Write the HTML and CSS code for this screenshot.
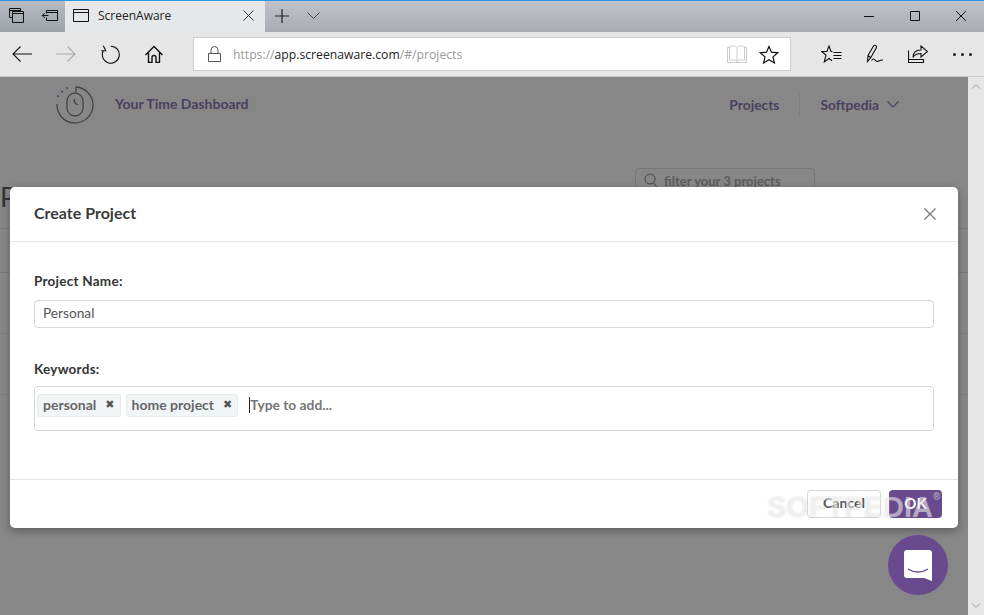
FILE: index.html
```html
<!DOCTYPE html>
<html lang="en">
<head>
    <meta charset="UTF-8">
    <title>ScreenAware</title>
    <link rel="stylesheet" href="styles.css">
</head>
<body>
    <!-- Tab strip -->
    <div class="tabbar">
        <div class="tab-tools">
            <svg width="15" height="15" viewBox="0 0 15 15"><path d="M.5 9.500v-9h11v3M.5 2.500h11M.5 9.500h3M3.500 3.500h11v11h-11zM3.500 5.500h11" fill="none" stroke="#111"/></svg>
            <svg width="17" height="11" viewBox="0 0 17 11"><path d="M5.500 3.500v-3h11v10h-11v-3M5.500 2.500h11M7.500 5.500h-6M3.800 3l-2.500 2.500L3.800 8" fill="none" stroke="#111"/></svg>
        </div>
        <div class="tab">
            <svg width="16" height="13" viewBox="0 0 16 13"><path d="M.5.5h15v12H.5zM.5 3.500h15" fill="none" stroke="#111"/></svg>
            <span class="tab-title">ScreenAware</span>
            <svg width="11" height="11" viewBox="0 0 11 11"><path d="M.5.500l10 10M10.500.5l-10 10" stroke="#333"/></svg>
        </div>
        <div class="tab-new">
            <svg width="14" height="14" viewBox="0 0 14 14"><path d="M7 0v14M0 7h14" stroke="#222" stroke-width="1.200"/></svg>
            <svg width="13" height="7" viewBox="0 0 13 7"><path d="M.5.500l6 6 6-6" fill="none" stroke="#444"/></svg>
        </div>
        <div class="win-btns">
            <svg width="10" height="10" viewBox="0 0 10 10"><path d="M0 5.500h10" stroke="#111"/></svg>
            <svg width="10" height="10" viewBox="0 0 10 10"><path d="M.5.500h9v9h-9z" fill="none" stroke="#111"/></svg>
            <svg width="10" height="10" viewBox="0 0 10 10"><path d="M0 0l10 10M10 0L0 10" stroke="#111"/></svg>
        </div>
    </div>

    <!-- Address bar -->
    <div class="toolbar">
        <div class="nav-btns">
            <svg width="20" height="16" viewBox="0 0 20 16"><path d="M20 8H1M8.500.5L1 8l7.500 7.500" fill="none" stroke="#111" stroke-width="1.100"/></svg>
            <svg width="20" height="16" viewBox="0 0 20 16"><path d="M0 8h19M11.500.5L19 8l-7.500 7.500" fill="none" stroke="#aaa" stroke-width="1.100"/></svg>
            <svg class="refresh" width="19" height="19" viewBox="0 0 19 19"><path d="M9.500 1a8.500 8.500 0 1 1-7.300 4.200M2 .5l2.500 5H0" fill="none" stroke="#111" stroke-width="1.100" transform="translate(.3 .2)"/></svg>
            <svg width="18" height="18" viewBox="0 0 18 18"><path d="M.5 10L9 1.500 17.500 10M3.500 7.500v10h3.500v-5a2 2 0 0 1 4 0v5h3.500v-10" fill="none" stroke="#111" stroke-width="1.400"/></svg>
        </div>
        <div class="address">
            <svg class="lock" width="13" height="16" viewBox="0 0 13 16"><path d="M.5 7.500h12v8H.5zM3 7.500V4a3.500 3.500 0 0 1 7 0v3.500" fill="none" stroke="#555"/></svg>
            <span class="url">https://<b>app.screenaware.com</b>/#/projects</span>
            <svg class="book" width="20" height="19" viewBox="0 0 20 19"><path d="M.5 2.500h2M17.500 2.500h2v15H.5v-15M2.500 1.500c3-1 6-1 7.500 1 1.500-2 4.500-2 7.500-1v14c-3-1-6-1-7.500 1-1.500-2-4.500-2-7.500-1zM10 2.500v14" fill="none" stroke="#ccc"/></svg>
            <svg width="20" height="19" viewBox="0 0 20 19"><path d="M10 1.500l2.500 5.700 6.200.6-4.700 4.100 1.400 6.100L10 14.800 4.600 18l1.400-6.100-4.700-4.100 6.200-.6z" fill="none" stroke="#111" stroke-width="1.200"/></svg>
        </div>
        <div class="side-btns">
            <svg width="21" height="19" viewBox="0 0 21 19"><path d="M11.500 6.500H10L8 1 6 6.500H.5L5 10l-1.700 7L8 13.500l3 2.300M12.500 7.500h8M12.500 10.500h8M12.500 13.500h8" fill="none" stroke="#111" stroke-width="1.100"/></svg>
            <svg width="18" height="20" viewBox="0 0 18 20"><path d="M1.500 17.500l.5-6 5.500-9.500c1-1.500 3.500-.5 3 1.500l-6 10.500zM2 11.500l3 2.500M5.500 16.500c2.500-4 3.500 1 5.500 1s2-1.500 6-1.500" fill="none" stroke="#111" stroke-width="1.100"/></svg>
            <svg width="20" height="18" viewBox="0 0 20 18"><path d="M.5 5.500v12h15V14M.5 14.500h15M5 12.500c0-5 3-7.500 8-7.500V1l6.500 5.500L13 12V8.500c-3.500 0-6.500 1-8 4z" fill="none" stroke="#111" stroke-width="1.100"/></svg>
            <div class="more"><i></i><i></i><i></i></div>
        </div>
    </div>

    <div class="viewport">
        <div class="page">
            <!-- App behind the dialog -->
            <div class="app-head">
                <svg class="app-logo" width="38" height="38" viewBox="0 0 38 38">
                    <path d="M20 6V1a18 18 0 1 1-19 17" fill="none" stroke="#444" stroke-width="1.300"/>
                    <rect x="11" y="7" width="16" height="23" rx="8" fill="none" stroke="#444" stroke-width="1.300"/>
                    <path d="M18 13l1 4 3 2" fill="none" stroke="#444" stroke-width="1.300"/>
                    <path d="M1.500 10.500l1-.8M5.500 6l1-.8M10.500 2.500l1-.8" stroke="#4b2a6b" stroke-width="1.800"/>
                </svg>
                <span class="app-title">Your Time Dashboard</span>
                <nav class="app-nav">
                    <span>Projects</span>
                    <span class="nav-sep"></span>
                    <span>Softpedia</span>
                    <svg width="12" height="7" viewBox="0 0 12 7"><path d="M.5.500L6 6 11.500.5" fill="none" stroke="#4a3f5c" stroke-width="1.100"/></svg>
                </nav>
            </div>
            <div class="filter">
                <svg width="13" height="14" viewBox="0 0 13 14"><circle cx="6" cy="6" r="5" fill="none" stroke="#444"/><path d="M9.500 10l3 3.500" stroke="#444"/></svg>
                <span>filter your 3 projects</span>
            </div>
            <div class="app-heading">P</div>
            <div class="rows"><div></div><div></div><div></div><div></div></div>

            <!-- Create project dialog -->
            <div class="modal">
                <div class="modal-head">
                    <h2>Create Project</h2>
                    <svg width="12" height="12" viewBox="0 0 12 12"><path d="M.5.500l11 11M11.500.5l-11 11" stroke="#777" stroke-width="1.200"/></svg>
                </div>
                <div class="modal-body">
                    <label class="field-label">Project Name:</label>
                    <div class="input">Personal</div>
                    <label class="field-label keywords-label">Keywords:</label>
                    <div class="tags">
                        <span class="tag">personal <em>&#10006;</em></span>
                        <span class="tag">home project <em>&#10006;</em></span>
                        <span class="caret"></span>
                        <span class="placeholder">Type to add...</span>
                    </div>
                </div>
                <div class="modal-foot">
                    <button class="btn btn-cancel">Cancel</button>
                    <button class="btn btn-ok">OK</button>
                </div>
            </div>

            <div class="watermark">SOFTPEDIA<sup>&reg;</sup></div>

            <div class="chat">
                <svg width="30" height="33" viewBox="0 0 30 33"><path d="M4 1h22a3 3 0 0 1 3 3v28l-8-3H4a3 3 0 0 1-3-3V4a3 3 0 0 1 3-3z" fill="#fff"/><path d="M5 20c6 4 14 4 20 0" fill="none" stroke="#6a4a8e" stroke-width="1.500"/></svg>
            </div>
        </div>
        <div class="scrollbar">
            <svg width="10" height="6" viewBox="0 0 10 6"><path d="M1 5.500l4-4 4 4" fill="none" stroke="#999"/></svg>
            <svg width="10" height="6" viewBox="0 0 10 6"><path d="M1 .500l4 4 4-4" fill="none" stroke="#999"/></svg>
        </div>
    </div>
</body>
</html>
```

FILE: styles.css
```css
* {
    box-sizing: border-box;
}
body {
    margin: 0;
    width: 984px;
    height: 615px;
    overflow: hidden;
    display: flex;
    flex-direction: column;
    font-family: Lato, "Open Sans", sans-serif;
    background-color: #e6e6e6;
}

/* Tab strip */
.tabbar {
    height: 32px;
    flex: none;
    display: flex;
    align-items: stretch;
    border-top: 1px solid #2b93e0;
    background: linear-gradient(#c0c4ca, #a8acb2);
}
.tabbar > div {
    padding-bottom: 2px;
}
.tab-tools {
    width: 65px;
    display: flex;
    align-items: center;
    gap: 17px;
    padding-left: 9px;
    background: linear-gradient(#b6bbc1, #a0a4aa);
}
.tab {
    width: 200px;
    display: flex;
    align-items: center;
    padding: 0 11px 0 8px;
    background-color: #e6e7e9;
}
.tab-title {
    flex: 1;
    margin-left: 9px;
    font-family: "Open Sans", sans-serif;
    font-size: 12px;
    color: #222;
}
.tab-new {
    display: flex;
    align-items: center;
    gap: 18px;
    padding-left: 10px;
}
.win-btns {
    margin-left: auto;
    display: flex;
    align-items: center;
    gap: 36px;
    padding-right: 18px;
}

/* Address bar */
.toolbar {
    height: 45px;
    flex: none;
    display: flex;
    align-items: center;
    border-bottom: 1px solid #c8c8c8;
    background-color: #e6e6e6;
}
.nav-btns {
    width: 193px;
    display: flex;
    align-items: center;
    gap: 24px;
    padding-left: 12px;
}
.refresh {
    margin: 0 1px;
}
.address {
    width: 598px;
    height: 34px;
    display: flex;
    align-items: center;
    padding: 0 11px 0 14px;
    background-color: #fff;
    border: 1px solid #cfcfcf;
}
.url {
    flex: 1;
    margin-left: 12px;
    font-family: "Open Sans", sans-serif;
    font-size: 12.200px;
    color: #999;
}
.url b {
    font-weight: 400;
    color: #222;
}
.book {
    margin-right: 12px;
}
.side-btns {
    flex: 1;
    display: flex;
    align-items: center;
    gap: 24px;
    padding-left: 30px;
}
.more {
    display: flex;
    gap: 5px;
    margin-left: 1px;
}
.more i {
    width: 3px;
    height: 3px;
    border-radius: 50%;
    background-color: #222;
}

/* Page area */
.viewport {
    flex: 1;
    display: flex;
    min-height: 0;
}
.page {
    position: relative;
    flex: 1;
    overflow: hidden;
    background-color: #878787;
}
.scrollbar {
    width: 16px;
    display: flex;
    flex-direction: column;
    justify-content: space-between;
    align-items: center;
    padding: 6px 0;
    background-color: #e6e6e6;
}

/* App behind the dialog */
.app-head {
    display: flex;
    align-items: center;
    height: 55px;
    padding: 0 69px 0 56px;
}
.app-logo {
    margin-top: 1px;
}
.app-title {
    margin: 0 0 2px 21px;
    font-size: 14px;
    font-weight: 700;
    color: #4a3f5c;
}
.app-nav {
    margin-left: auto;
    display: flex;
    align-items: center;
    font-size: 13.800px;
    font-weight: 700;
    color: #4a3f5c;
}
.nav-sep {
    width: 1px;
    height: 22px;
    margin: 0 20px;
    background-color: #7c7c7c;
}
.app-nav svg {
    margin-left: 8px;
}
.filter {
    position: absolute;
    left: 635px;
    top: 91px;
    width: 180px;
    height: 30px;
    display: flex;
    align-items: flex-start;
    gap: 7px;
    padding: 4px 8px;
    border: 1px solid #777;
    border-radius: 4px;
    font-size: 13px;
    font-weight: 700;
    color: #5c5c5c;
}
.app-heading {
    position: absolute;
    left: 0;
    top: 103px;
    font-size: 27px;
    color: #333;
}
.rows {
    position: absolute;
    left: 0;
    right: 0;
    top: 151px;
}
.rows div {
    height: 61px;
    border-top: 1px solid #7b7b7b;
}
.rows div:first-child {
    height: 44px;
}

/* Dialog */
.modal {
    position: absolute;
    left: 10px;
    top: 110px;
    width: 948px;
    height: 341px;
    display: flex;
    flex-direction: column;
    border-radius: 5px;
    background-color: #fff;
    box-shadow: 0 3px 9px rgba(0, 0, 0, .3);
}
.modal-head {
    height: 55px;
    flex: none;
    display: flex;
    align-items: center;
    justify-content: space-between;
    padding: 0 22px 0 24px;
    border-bottom: 1px solid #e5e5e5;
}
.modal-head h2 {
    margin: 0 0 4px;
    font-size: 16px;
    font-weight: 700;
    color: #3a3a3a;
}
.modal-body {
    flex: 1;
    padding: 30px 24px 0;
}
.field-label {
    display: block;
    height: 18px;
    font-size: 13.500px;
    font-weight: 700;
    line-height: 18px;
    letter-spacing: .25px;
    color: #333;
}
.input {
    height: 28px;
    margin-top: 10px;
    padding: 0 8px;
    line-height: 24px;
    font-size: 13.700px;
    color: #555;
    border: 1px solid #d6d6d6;
    border-radius: 4px;
}
.keywords-label {
    margin-top: 32px;
}
.tags {
    height: 45px;
    margin-top: 8px;
    display: flex;
    align-items: flex-start;
    gap: 5px;
    padding: 7px 2px;
    border: 1px solid #d6d6d6;
    border-radius: 4px;
}
.tag {
    height: 23px;
    display: flex;
    align-items: center;
    gap: 9px;
    padding: 0 5px 2px;
    font-size: 14px;
    font-weight: 700;
    color: #666;
    background-color: #f2f5f8;
    border: 1px solid #e6ebf0;
    border-radius: 3px;
}
.tag em {
    font-family: "DejaVu Sans", sans-serif;
    font-style: normal;
    font-size: 11px;
    color: #555;
}
.caret {
    width: 1px;
    height: 16px;
    margin: 3px 0 0 6px;
    background-color: #222;
}
.placeholder {
    margin-left: -5px;
    line-height: 22px;
    font-size: 13.800px;
    font-weight: 700;
    color: #777;
}
.modal-foot {
    height: 49px;
    flex: none;
    display: flex;
    justify-content: flex-end;
    align-items: flex-start;
    gap: 8px;
    padding: 10px 16px 0;
    border-top: 1px solid #e5e5e5;
}
.btn {
    height: 28px;
    padding: 0 0 3px;
    font-family: inherit;
    font-size: 14px;
    font-weight: 700;
    border-radius: 4px;
}
.btn-cancel {
    width: 74px;
    color: #555;
    background-color: #fff;
    border: 1px solid #d6d6d6;
}
.btn-ok {
    width: 53px;
    font-size: 15px;
    color: #fff;
    background-color: #6a4a8e;
    border: none;
}

/* Softpedia mark over the footer */
.watermark {
    position: absolute;
    left: 767px;
    top: 414px;
    font-family: "Liberation Sans", sans-serif;
    font-size: 29px;
    font-weight: 700;
    color: rgba(255, 255, 255, .5);
    text-shadow: 0 0 2px rgba(120, 120, 120, .25);
    white-space: nowrap;
}
.watermark sup {
    font-size: 10px;
    vertical-align: 17px;
}

.chat {
    position: absolute;
    left: 888px;
    top: 458px;
    width: 60px;
    height: 60px;
    display: flex;
    align-items: center;
    justify-content: center;
    border-radius: 50%;
    background-color: #6a4a8e;
}
```
